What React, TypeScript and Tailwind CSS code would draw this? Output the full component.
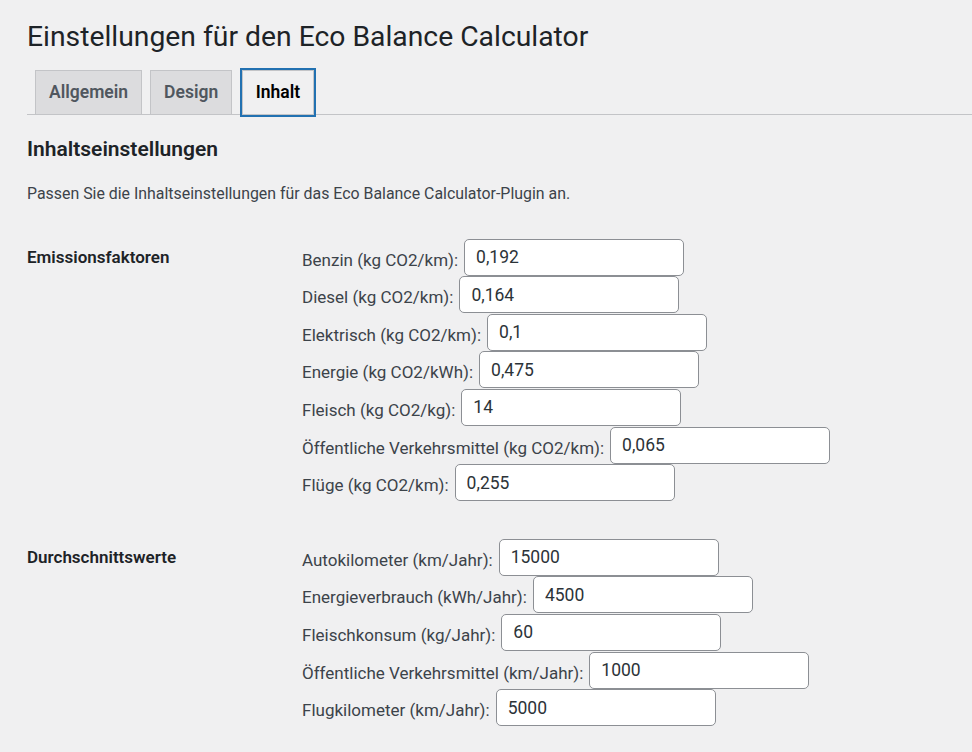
import React from 'react';

const font = "font-['Segoe_UI',Roboto,'Noto_Sans',sans-serif]";

interface Field {
  label: string;
  value: string;
}

const emissions: Field[] = [
  { label: 'Benzin (kg CO2/km):', value: '0,192' },
  { label: 'Diesel (kg CO2/km):', value: '0,164' },
  { label: 'Elektrisch (kg CO2/km):', value: '0,1' },
  { label: 'Energie (kg CO2/kWh):', value: '0,475' },
  { label: 'Fleisch (kg CO2/kg):', value: '14' },
  { label: 'Öffentliche Verkehrsmittel (kg CO2/km):', value: '0,065' },
  { label: 'Flüge (kg CO2/km):', value: '0,255' },
];

const averages: Field[] = [
  { label: 'Autokilometer (km/Jahr):', value: '15000' },
  { label: 'Energieverbrauch (kWh/Jahr):', value: '4500' },
  { label: 'Fleischkonsum (kg/Jahr):', value: '60' },
  { label: 'Öffentliche Verkehrsmittel (km/Jahr):', value: '1000' },
  { label: 'Flugkilometer (km/Jahr):', value: '5000' },
];

function FieldRow({ field }: { field: Field }) {
  return (
    <div className="flex items-end h-[37.6px]">
      <label className="mb-[5px] text-[17px] leading-[21px] text-[#3c434a]">{field.label}</label>
      <input
        type="text"
        defaultValue={field.value}
        className="ml-[6px] w-[220px] h-[37px] px-[11px] bg-white border border-[#8c8f94] rounded-[5px] text-[17.5px] text-[#2c3338] outline-none"
      />
    </div>
  );
}

function Section({ title, fields }: { title: string; fields: Field[] }) {
  return (
    <div className="flex">
      <div className="w-[275px] shrink-0 pt-[28px] pb-[25px] text-[17px] leading-[21px] font-semibold text-[#1d2327]">
        {title}
      </div>
      <div className="pt-[19px] pb-[18px]">
        {fields.map((f) => (
          <FieldRow key={f.label} field={f} />
        ))}
      </div>
    </div>
  );
}

const tabs = ['Allgemein', 'Design', 'Inhalt'];

export default function App() {
  return (
    <div className={`min-h-screen bg-[#f0f0f1] ${font} overflow-hidden`}>
      <div className="pl-[27px]">
        <h1 className="pt-[18px] text-[28.3px] leading-[38px] font-normal text-[#1d2327]">
          Einstellungen für den Eco Balance Calculator
        </h1>

        {/* tabs */}
        <nav className="mt-[14px] flex items-end border-b border-[#c3c4c7]">
          {tabs.map((t) =>
            t === 'Inhalt' ? (
              <div
                key={t}
                className="ml-[10px] -mb-px h-[45px] px-[12.5px] flex items-center border border-[#c3c4c7] bg-[#f0f0f1] text-[17.5px] font-semibold text-black shadow-[0_0_0_2px_#2271b1]"
              >
                {t}
              </div>
            ) : (
              <div
                key={t}
                className="ml-[8px] -mb-px h-[45px] px-[13px] flex items-center border border-[#c3c4c7] bg-[#dcdcde] text-[17.5px] font-semibold text-[#50575e]"
              >
                {t}
              </div>
            )
          )}
        </nav>

        <h2 className="mt-[21px] text-[21px] leading-[27px] font-semibold text-[#1d2327]">
          Inhaltseinstellungen
        </h2>
        <p className="mt-[19px] text-[15.9px] leading-[24px] text-[#3c434a]">
          Passen Sie die Inhaltseinstellungen für das Eco Balance Calculator-Plugin an.
        </p>

        <div className="mt-[13px]">
          <Section title="Emissionsfaktoren" fields={emissions} />
          <Section title="Durchschnittswerte" fields={averages} />
        </div>
      </div>
    </div>
  );
}
